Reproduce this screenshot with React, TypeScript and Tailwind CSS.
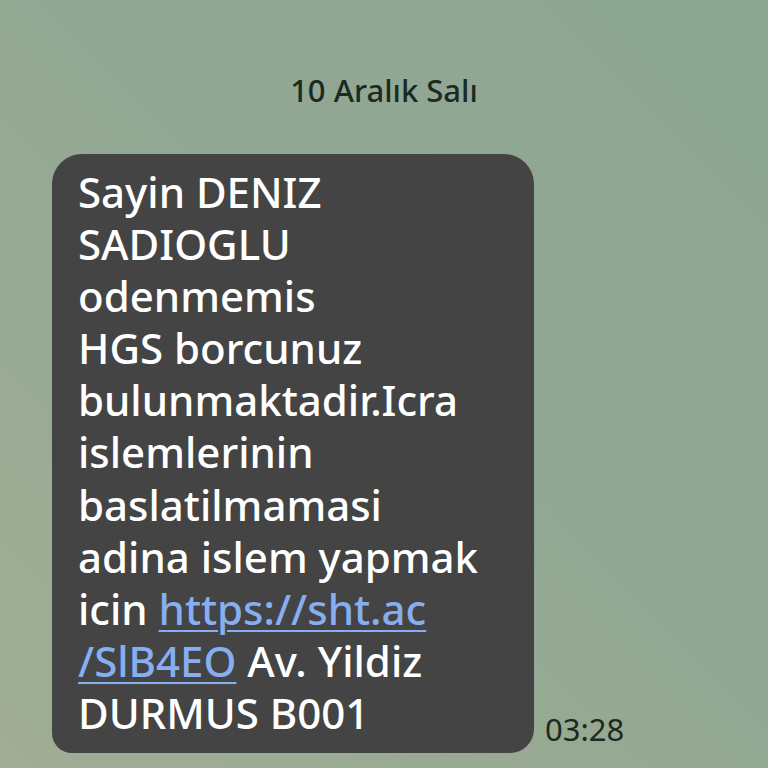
import React from 'react';

const lines: React.ReactNode[] = [
  'Sayin DENIZ',
  'SADIOGLU',
  'odenmemis',
  'HGS borcunuz',
  'bulunmaktadir.Icra',
  'islemlerinin',
  'baslatilmamasi',
  'adina islem yapmak',
  <>
    icin <span className="text-[#86aef0] underline decoration-2 underline-offset-[5px]">https://sht.ac</span>
  </>,
  <>
    <span className="text-[#86aef0] underline decoration-2 underline-offset-[5px]">/SlB4EO</span> Av. Yildiz
  </>,
  'DURMUS B001',
];

const App: React.FC = () => {
  return (
    <div
      className="w-[768px] h-[768px] overflow-hidden bg-gradient-to-bl from-[#8ca693] via-[#93a893] to-[#a1ad95]"
      style={{ fontFamily: '"Noto Sans", "Open Sans", sans-serif' }}
    >
      <div className="pt-[68px] text-center text-[31px] leading-[44px] font-medium text-[#1c2a20]">
        10 Aralık Salı
      </div>

      <div className="flex items-end mt-[42px] ml-[52px]">
        <div className="w-[482px] bg-[#444444] rounded-[30px] rounded-bl-[20px] rounded-br-[24px] pl-[26px] pr-4 pt-[12px] pb-[14px] text-white text-[42px] leading-[52.1px] font-medium">
          {lines.map((l, i) => (
            <div key={i} className="whitespace-nowrap">{l}</div>
          ))}
        </div>
        <div className="ml-[11px] mb-[4px] text-[31px] leading-[40px] text-[#1c2a20]">03:28</div>
      </div>
    </div>
  );
};

export default App;
